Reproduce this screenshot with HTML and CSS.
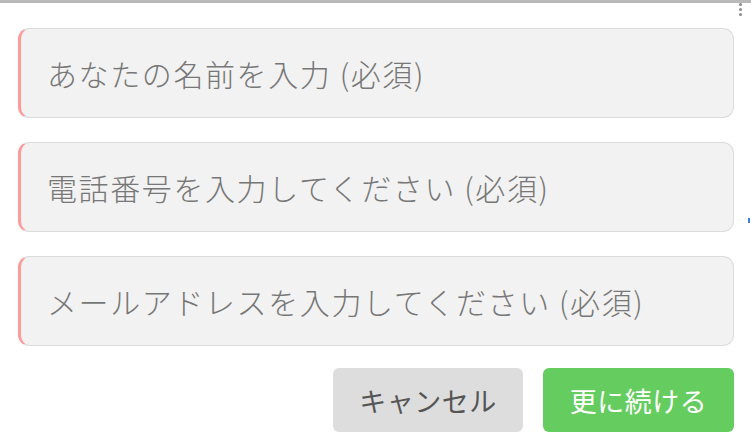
FILE: index.html
```html
<!DOCTYPE html>
<html lang="ja">
<head>
<meta charset="utf-8">
<link rel="stylesheet" href="styles.css">
</head>
<body>
<div class="frame">
  <span class="kebab"><i></i><i></i><i></i></span>
  <span class="marker"></span>
  <form class="form">
    <div class="field"><span class="ph">あなたの名前を入力 (必須)</span></div>
    <div class="field"><span class="ph">電話番号を入力してください (必須)</span></div>
    <div class="field"><span class="ph">メールアドレスを入力してください (必須)</span></div>
    <div class="actions">
      <button type="button" class="btn btn-cancel">キャンセル</button>
      <button type="button" class="btn btn-next">更に続ける</button>
    </div>
  </form>
</div>
</body>
</html>
```
FILE: styles.css
```css
html, body {
  margin: 0;
  padding: 0;
  background: #ffffff;
}
body {
  width: 751px;
  height: 442px;
  overflow: hidden;
  font-family: "Noto Sans CJK JP", "Noto Sans", sans-serif;
}
.frame {
  position: relative;
  height: 439px;
  border-top: 3px solid #b9b9b9;
}
.kebab {
  position: absolute;
  top: 0;
  right: 9px;
  display: flex;
  flex-direction: column;
  gap: 2px;
}
.kebab i {
  display: block;
  width: 3px;
  height: 3px;
  border-radius: 50%;
  background: #8a8a8a;
}
.marker {
  position: absolute;
  top: 215px;
  right: 1px;
  width: 2px;
  height: 5px;
  background: #3b7fd9;
}
.form {
  margin: 0;
  padding: 25px 17px 0 18px;
  display: flex;
  flex-direction: column;
  gap: 24px;
}
.field {
  box-sizing: border-box;
  height: 90px;
  border: 1px solid #dcdcdc;
  border-left: 3px solid #ff9a9a;
  border-radius: 11px;
  background: #f2f2f2;
  display: flex;
  align-items: center;
  padding-left: 26px;
}
.ph {
  font-size: 30px;
  font-weight: 300;
  color: #777777;
  letter-spacing: 1.6px;
  white-space: nowrap;
}
.actions {
  display: flex;
  justify-content: flex-end;
  gap: 20px;
  margin-top: -2px;
}
.btn {
  box-sizing: border-box;
  width: 190px;
  height: 64px;
  border: none;
  border-radius: 6px;
  font-family: inherit;
  font-size: 27px;
  letter-spacing: 0.5px;
  padding: 0;
}
.btn-cancel {
  background: #dddddd;
  color: #555555;
}
.btn-next {
  width: 191px;
  background: #65cc5f;
  color: #ffffff;
}
```
